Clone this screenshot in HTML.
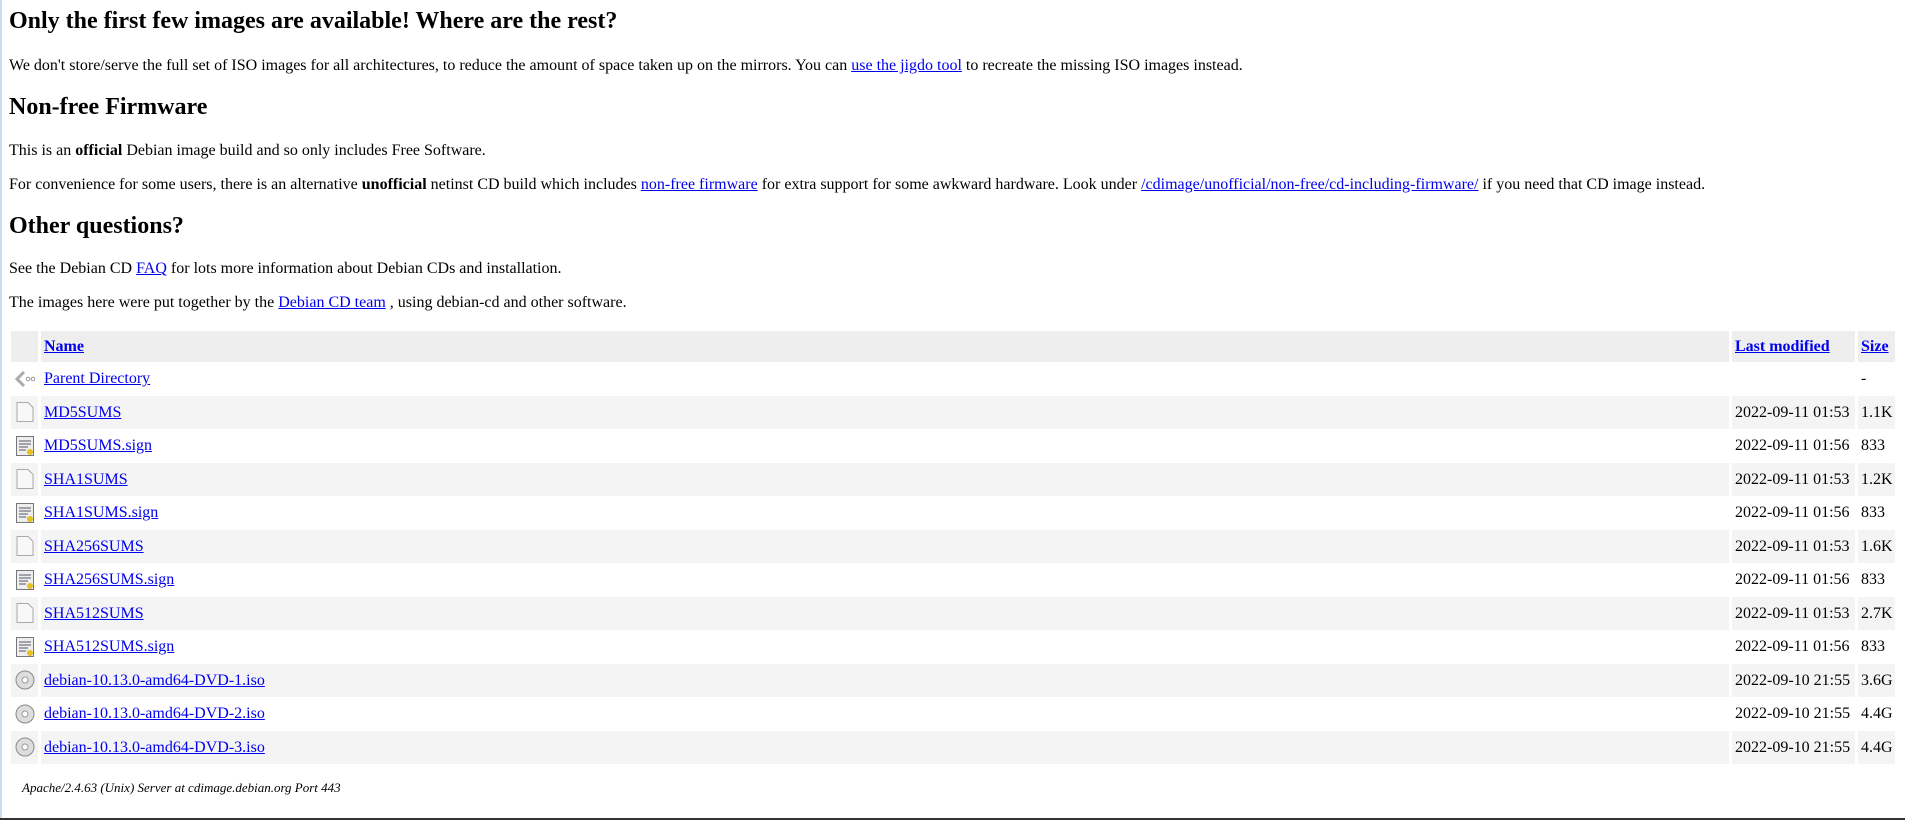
<!DOCTYPE html>
<html><head><meta charset="utf-8"><style>
html,body{margin:0;padding:0;background:#fff;}
body{width:1905px;height:820px;overflow:hidden;position:relative;font-family:"Liberation Serif",serif;font-size:16px;color:#000;}
.lb{position:absolute;left:0;top:0;width:2px;height:818px;background:#c8dcf2;}
.bb{position:absolute;left:0;bottom:0;width:1905px;height:2px;background:#333;}
h1,h2{font-size:24px;font-weight:bold;margin:0;position:absolute;white-space:nowrap;}
p{margin:0;position:absolute;white-space:nowrap;}
a{color:#00e;}
table{position:absolute;left:8px;top:331px;border-collapse:separate;border-spacing:3px 0;width:1890px;table-layout:fixed;}
td,th{box-sizing:border-box;padding:1px 3px 0;height:33.5px;text-align:left;vertical-align:middle;white-space:nowrap;overflow:hidden;}
th{background:#eee;height:31px;}
tr.g td{background:#f4f4f4;}
.i{width:27px;padding:0 1px 0 3px;}
.d{width:123px;}.s{width:37px;}
svg{display:block;}
address{position:absolute;left:22px;top:780px;font-size:13px;font-style:italic;white-space:nowrap;}
</style></head><body>
<div class="lb"></div><div class="bb"></div>
<h1 style="left:9px;top:8px">Only the first few images are available! Where are the rest?</h1>
<p style="left:9px;top:57px">We don't store/serve the full set of ISO images for all architectures, to reduce the amount of space taken up on the mirrors. You can <a href="#">use the jigdo tool</a> to recreate the missing ISO images instead.</p>
<h2 style="left:9px;top:94px">Non-free Firmware</h2>
<p style="left:9px;top:142px">This is an <b>official</b> Debian image build and so only includes Free Software.</p>
<p style="left:9px;top:176px">For convenience for some users, there is an alternative <b>unofficial</b> netinst CD build which includes <a href="#">non-free firmware</a> for extra support for some awkward hardware. Look under <a href="#">/cdimage/unofficial/non-free/cd-including-firmware/</a> if you need that CD image instead.</p>
<h2 style="left:9px;top:213px">Other questions?</h2>
<p style="left:9px;top:260px">See the Debian CD <a href="#">FAQ</a> for lots more information about Debian CDs and installation.</p>
<p style="left:9px;top:294px">The images here were put together by the <a href="#">Debian CD team</a> , using debian-cd and other software.</p>
<table>
<tr><th class="i"></th><th><a href="#">Name</a></th><th class="d"><a href="#">Last modified</a></th><th class="s"><a href="#">Size</a></th></tr>
<tr><td class="i"><svg width="22" height="22" viewBox="0 0 22 22"><path d="M10 4 L3 11 L10 18" fill="none" stroke="#aaa" stroke-width="3"/><circle cx="14" cy="11" r="1.8" fill="none" stroke="#999"/><circle cx="19" cy="11" r="1.8" fill="none" stroke="#999"/></svg></td><td><a href="#">Parent Directory</a></td><td></td><td>-</td></tr>
<tr class="g"><td class="i"><svg width="22" height="22"><path d="M3 1.5h11l5 5v14H3z" fill="#f8f8f8" stroke="#aaa"/></svg></td><td><a href="#">MD5SUMS</a></td><td>2022-09-11 01:53</td><td>1.1K</td></tr>
<tr><td class="i"><svg width="22" height="22"><rect x="2.5" y="1.5" width="17" height="19" fill="#eee" stroke="#777"/><path d="M5 6h12M5 9h12M5 12h9M5 15h7" stroke="#556"/><circle cx="16" cy="17" r="3" fill="#e6c020"/></svg></td><td><a href="#">MD5SUMS.sign</a></td><td>2022-09-11 01:56</td><td>833</td></tr>
<tr class="g"><td class="i"><svg width="22" height="22"><path d="M3 1.5h11l5 5v14H3z" fill="#f8f8f8" stroke="#aaa"/></svg></td><td><a href="#">SHA1SUMS</a></td><td>2022-09-11 01:53</td><td>1.2K</td></tr>
<tr><td class="i"><svg width="22" height="22"><rect x="2.5" y="1.5" width="17" height="19" fill="#eee" stroke="#777"/><path d="M5 6h12M5 9h12M5 12h9M5 15h7" stroke="#556"/><circle cx="16" cy="17" r="3" fill="#e6c020"/></svg></td><td><a href="#">SHA1SUMS.sign</a></td><td>2022-09-11 01:56</td><td>833</td></tr>
<tr class="g"><td class="i"><svg width="22" height="22"><path d="M3 1.5h11l5 5v14H3z" fill="#f8f8f8" stroke="#aaa"/></svg></td><td><a href="#">SHA256SUMS</a></td><td>2022-09-11 01:53</td><td>1.6K</td></tr>
<tr><td class="i"><svg width="22" height="22"><rect x="2.5" y="1.5" width="17" height="19" fill="#eee" stroke="#777"/><path d="M5 6h12M5 9h12M5 12h9M5 15h7" stroke="#556"/><circle cx="16" cy="17" r="3" fill="#e6c020"/></svg></td><td><a href="#">SHA256SUMS.sign</a></td><td>2022-09-11 01:56</td><td>833</td></tr>
<tr class="g"><td class="i"><svg width="22" height="22"><path d="M3 1.5h11l5 5v14H3z" fill="#f8f8f8" stroke="#aaa"/></svg></td><td><a href="#">SHA512SUMS</a></td><td>2022-09-11 01:53</td><td>2.7K</td></tr>
<tr><td class="i"><svg width="22" height="22"><rect x="2.5" y="1.5" width="17" height="19" fill="#eee" stroke="#777"/><path d="M5 6h12M5 9h12M5 12h9M5 15h7" stroke="#556"/><circle cx="16" cy="17" r="3" fill="#e6c020"/></svg></td><td><a href="#">SHA512SUMS.sign</a></td><td>2022-09-11 01:56</td><td>833</td></tr>
<tr class="g"><td class="i"><svg width="22" height="22"><circle cx="11" cy="11" r="9" fill="#ddd" stroke="#888"/><circle cx="11" cy="11" r="3" fill="#fff" stroke="#999"/></svg></td><td><a href="#">debian-10.13.0-amd64-DVD-1.iso</a></td><td>2022-09-10 21:55</td><td>3.6G</td></tr>
<tr><td class="i"><svg width="22" height="22"><circle cx="11" cy="11" r="9" fill="#ddd" stroke="#888"/><circle cx="11" cy="11" r="3" fill="#fff" stroke="#999"/></svg></td><td><a href="#">debian-10.13.0-amd64-DVD-2.iso</a></td><td>2022-09-10 21:55</td><td>4.4G</td></tr>
<tr class="g"><td class="i"><svg width="22" height="22"><circle cx="11" cy="11" r="9" fill="#ddd" stroke="#888"/><circle cx="11" cy="11" r="3" fill="#fff" stroke="#999"/></svg></td><td><a href="#">debian-10.13.0-amd64-DVD-3.iso</a></td><td>2022-09-10 21:55</td><td>4.4G</td></tr>
</table>
<address>Apache/2.4.63 (Unix) Server at cdimage.debian.org Port 443</address>
</body></html>
